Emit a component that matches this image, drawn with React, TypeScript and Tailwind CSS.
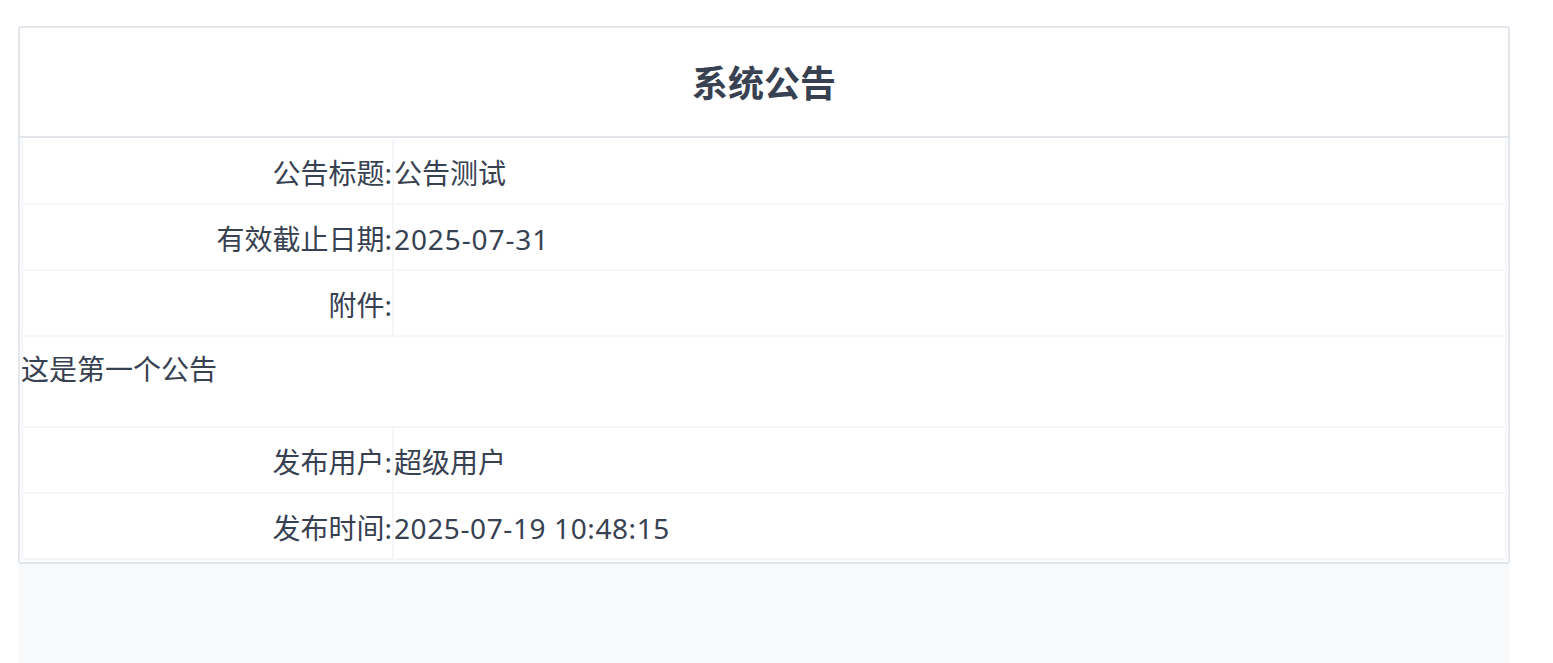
const ROWS_TOP = [
  { label: '公告标题:', value: '公告测试' },
  { label: '有效截止日期:', value: '2025-07-31', track: 'tracking-[0.9px]' },
  { label: '附件:', value: '' },
];

const ROWS_BOTTOM = [
  { label: '发布用户:', value: '超级用户' },
  { label: '发布时间:', value: '2025-07-19 10:48:15', track: 'tracking-[0.6px]' },
];

const font = { fontFamily: '"Noto Sans", "Noto Sans CJK SC", sans-serif' };

function InfoRow({ label, value, track }: { label: string; value: string; track?: string }) {
  return (
    <div className="flex h-[66px] border-b-2 border-[#f5f6f8]">
      <div className="w-[371px] flex items-center justify-end pt-[4px] border-r-2 border-[#f5f6f8]">
        {label}
      </div>
      <div className={`flex-1 flex items-center pt-[4px] ${track ?? ''}`}>{value}</div>
    </div>
  );
}

export default function App() {
  return (
    <div className="min-h-screen bg-white pl-[18px] pt-[26px]" style={font}>
      <div className="w-[1492px] min-h-[637px] bg-[#f8f9fb]">
        {/* Card */}
        <div className="bg-white border-2 border-[#e3e6eb] rounded-[3px] text-[#374151] pb-[2px]">
          {/* Header */}
          <div className="h-[110px] flex items-center justify-center pt-[4px] border-b-2 border-[#e3e6eb]">
            <h1 className="text-[36px] font-bold">系统公告</h1>
          </div>

          {/* Details */}
          <div className="mx-[1px] mt-[1px] text-[28px] leading-[34px] border-x-2 border-[#f5f6f8]">
            {ROWS_TOP.map((r) => (
              <InfoRow key={r.label} label={r.label} value={r.value} track={r.track} />
            ))}
            <div className="h-[91px] pt-[15px] -ml-[2px] border-b-2 border-[#f5f6f8]">
              这是第一个公告
            </div>
            {ROWS_BOTTOM.map((r) => (
              <InfoRow key={r.label} label={r.label} value={r.value} track={r.track} />
            ))}
          </div>
        </div>
      </div>
    </div>
  );
}
